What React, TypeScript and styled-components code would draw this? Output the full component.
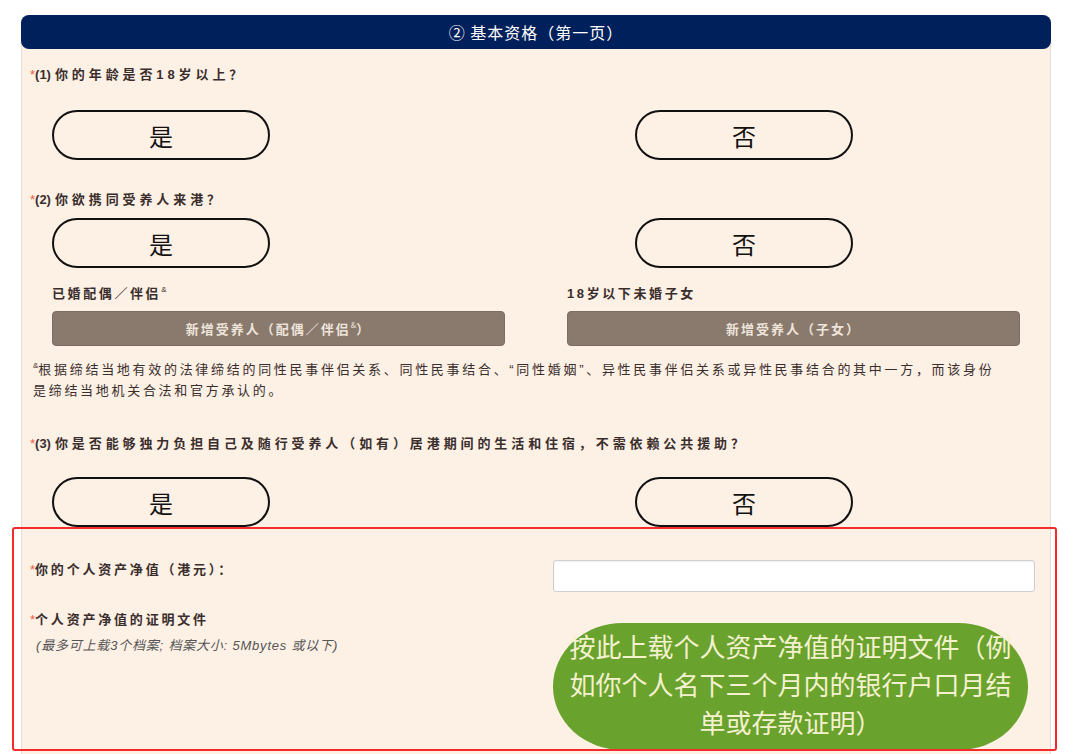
import React from "react";
import styled, { createGlobalStyle } from "styled-components";

const colors = {
  navy: "#00205b",
  cream: "#fdf0e5",
  text: "#3a2e2c",
  star: "#e8603c",
  taupe: "#8a796d",
  taupeText: "#ede4da",
  green: "#6aa22e",
  greenText: "#f4f1cf",
  annotate: "#f52a2a",
};

const GlobalStyle = createGlobalStyle`
  body {
    margin: 0;
    background: #ffffff;
    font-family: "Liberation Sans", "Noto Sans CJK SC", sans-serif;
    color: ${colors.text};
  }
`;

const Page = styled.div`
  width: 1030px;
  padding: 15px 0 0 21px;
`;

const Panel = styled.div`
  display: flow-root;
  background: ${colors.cream};
  border-left: 1px solid #e2ddd8;
  border-right: 1px solid #e2ddd8;
  border-radius: 8px 8px 0 0;
`;

const Header = styled.div`
  height: 34px;
  margin: 0 -1px;
  background: ${colors.navy};
  border-radius: 8px;
  color: #ffffff;
  font-family: "Noto Sans CJK SC", sans-serif;
  font-size: 16px;
  letter-spacing: 1px;
  display: flex;
  align-items: center;
  justify-content: center;
`;

const Body = styled.div`
  display: flow-root;
  padding: 0 10px 0 8px;
`;

const Question = styled.div<{ $gap: number }>`
  margin-top: ${(p) => p.$gap}px;
  font-size: 13px;
  font-weight: bold;
  line-height: 20px;
  letter-spacing: 3.9px;
  white-space: nowrap;
`;

const Star = styled.span`
  color: ${colors.star};
  font-weight: normal;
  letter-spacing: 0;
`;

const Num = styled.span`
  letter-spacing: 0;
  margin-right: 4px;
`;

const ChoiceRow = styled.div<{ $gap: number }>`
  margin-top: ${(p) => p.$gap}px;
  padding-left: 22px;
  display: grid;
  grid-template-columns: 515px 1fr;
`;

const Choice = styled.button<{ $shift?: number }>`
  width: 218px;
  height: 50px;
  margin-left: ${(p) => p.$shift ?? 0}px;
  border: 2px solid #111111;
  border-radius: 25px;
  background: transparent;
  font-family: "Noto Sans CJK SC", sans-serif;
  font-size: 24px;
  color: #111111;
  cursor: pointer;
`;

const DependantGrid = styled.div`
  margin-top: 16px;
  padding-left: 22px;
  display: grid;
  grid-template-columns: 453px 453px;
  column-gap: 62px;
`;

const DependantCol = styled.div`
  display: flex;
  flex-direction: column;
  gap: 7px;
`;

const SubLabel = styled.div`
  font-size: 13px;
  font-weight: bold;
  line-height: 20px;
  letter-spacing: 2.6px;
`;

const Sup = styled.sup`
  font-size: 8px;
  font-weight: normal;
  letter-spacing: 0;
  line-height: 0;
  vertical-align: 6px;
`;

const AddButton = styled.button`
  height: 35px;
  border: 1px solid #7c6c61;
  border-radius: 4px;
  background: ${colors.taupe};
  color: ${colors.taupeText};
  font-family: "Noto Sans CJK SC", sans-serif;
  font-size: 13px;
  font-weight: bold;
  letter-spacing: 2px;
`;

const Footnote = styled.p`
  margin: 13px 0 0 3px;
  font-size: 13px;
  line-height: 21px;
  letter-spacing: 2.7px;
  white-space: nowrap;
`;

const UploadSection = styled.div`
  position: relative;
  padding: 33px 0 30px;
  display: flex;
  flex-direction: column;
  gap: 18px;
`;

const Annotation = styled.div`
  position: absolute;
  top: 0;
  left: -18px;
  right: -17px;
  height: 224px;
  box-sizing: border-box;
  border: 2px solid ${colors.annotate};
  border-radius: 3px;
  pointer-events: none;
`;

const FieldRow = styled.div`
  display: grid;
  grid-template-columns: 523px 482px;
  align-items: start;
`;

const FieldLabel = styled.div`
  font-size: 13px;
  font-weight: bold;
  line-height: 20px;
  letter-spacing: 2.8px;
`;

const Hint = styled.div`
  margin: 7px 0 0 6px;
  font-size: 13px;
  line-height: 18px;
  letter-spacing: 0.8px;
  font-style: italic;
  color: #555555;
`;

const TextInput = styled.input`
  box-sizing: border-box;
  width: 482px;
  height: 32px;
  border: 1px solid #cfcfcf;
  border-radius: 3px;
  background: #ffffff;
  box-shadow: inset 0 1px 2px rgba(0, 0, 0, 0.06);
`;

const UploadButton = styled.button`
  margin-top: 13px;
  width: 475px;
  height: 127px;
  border: none;
  border-radius: 70px / 64px;
  background: ${colors.green};
  color: ${colors.greenText};
  font-family: "Noto Sans CJK SC", sans-serif;
  font-size: 26px;
  line-height: 38px;
  padding: 0 16px 6px;
`;

const YesNo: React.FC<{ gap: number }> = ({ gap }) => (
  <ChoiceRow $gap={gap}>
    <Choice>是</Choice>
    <Choice $shift={68}>否</Choice>
  </ChoiceRow>
);

const App: React.FC = () => {
  return (
    <>
      <GlobalStyle />
      <Page>
        <Panel>
          <Header>② 基本资格（第一页）</Header>
          <Body>
            <Question $gap={16}>
              <Star>*</Star>
              <Num>(1)</Num>你的年龄是否18岁以上？
            </Question>
            <YesNo gap={25} />

            <Question $gap={30}>
              <Star>*</Star>
              <Num>(2)</Num>你欲携同受养人来港？
            </Question>
            <YesNo gap={8} />

            <DependantGrid>
              <DependantCol>
                <SubLabel>
                  已婚配偶／伴侣<Sup>&amp;</Sup>
                </SubLabel>
                <AddButton>
                  新增受养人（配偶／伴侣<Sup>&amp;</Sup>）
                </AddButton>
              </DependantCol>
              <DependantCol>
                <SubLabel>18岁以下未婚子女</SubLabel>
                <AddButton>新增受养人（子女）</AddButton>
              </DependantCol>
            </DependantGrid>

            <Footnote>
              <Sup>&amp;</Sup>
              根据缔结当地有效的法律缔结的同性民事伴侣关系、同性民事结合、“同性婚姻”、异性民事伴侣关系或异性民事结合的其中一方，而该身份
              <br />
              是缔结当地机关合法和官方承认的。
            </Footnote>

            <Question $gap={33}>
              <Star>*</Star>
              <Num>(3)</Num>
              你是否能够独力负担自己及随行受养人（如有）居港期间的生活和住宿，不需依赖公共援助？
            </Question>
            <YesNo gap={23} />

            <UploadSection>
              <FieldRow>
                <FieldLabel>
                  <Star>*</Star>你的个人资产净值（港元）：
                </FieldLabel>
                <TextInput type="text" />
              </FieldRow>
              <FieldRow>
                <div>
                  <FieldLabel>
                    <Star>*</Star>个人资产净值的证明文件
                  </FieldLabel>
                  <Hint>(最多可上载3个档案; 档案大小: 5Mbytes 或以下)</Hint>
                </div>
                <UploadButton>
                  按此上载个人资产净值的证明文件（例如你个人名下三个月内的银行户口月结单或存款证明）
                </UploadButton>
              </FieldRow>
              <Annotation />
            </UploadSection>
          </Body>
        </Panel>
      </Page>
    </>
  );
};

export default App;
